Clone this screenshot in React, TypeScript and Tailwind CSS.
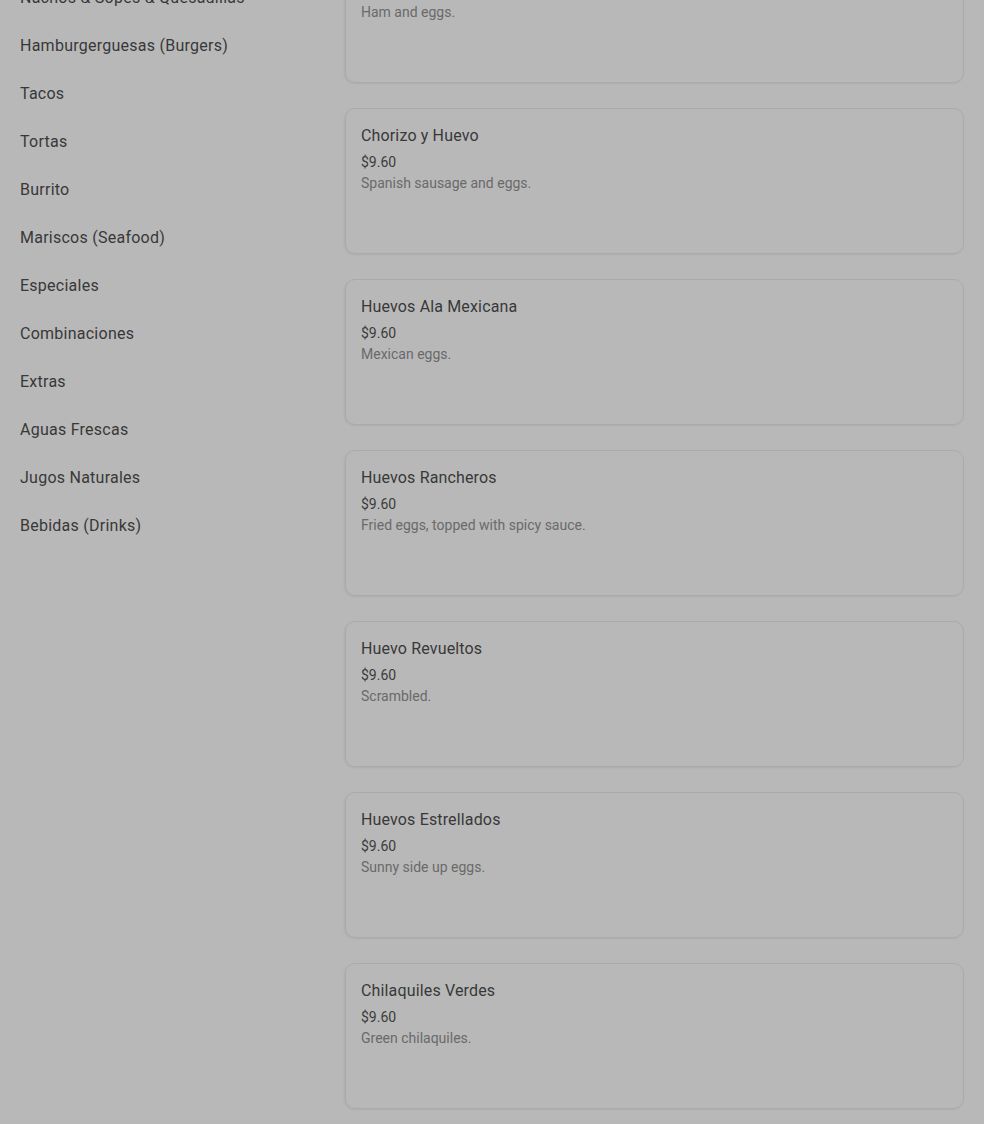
const categories = [
  "Nachos & Sopes & Quesadillas",
  "Hamburgerguesas (Burgers)",
  "Tacos",
  "Tortas",
  "Burrito",
  "Mariscos (Seafood)",
  "Especiales",
  "Combinaciones",
  "Extras",
  "Aguas Frescas",
  "Jugos Naturales",
  "Bebidas (Drinks)",
];

const items = [
  { name: "Jamón y Huevo", price: "$9.60", desc: "Ham and eggs." },
  { name: "Chorizo y Huevo", price: "$9.60", desc: "Spanish sausage and eggs." },
  { name: "Huevos Ala Mexicana", price: "$9.60", desc: "Mexican eggs." },
  { name: "Huevos Rancheros", price: "$9.60", desc: "Fried eggs, topped with spicy sauce." },
  { name: "Huevo Revueltos", price: "$9.60", desc: "Scrambled." },
  { name: "Huevos Estrellados", price: "$9.60", desc: "Sunny side up eggs." },
  { name: "Chilaquiles Verdes", price: "$9.60", desc: "Green chilaquiles." },
];

export default function App() {
  return (
    <div
      className="h-[1124px] overflow-hidden bg-[#b8b8b8]"
      style={{ fontFamily: "Roboto, 'Liberation Sans', sans-serif" }}
    >
      <div className="flex mt-[-63px] pr-[20px]">
        <aside className="w-[345px] shrink-0 pt-[37px] pl-5">
          <ul>
            {categories.map((c) => (
              <li key={c} className="py-3 text-base leading-6 tracking-[0.25px] text-[#383838]">
                {c}
              </li>
            ))}
          </ul>
        </aside>
        <main className="flex-1 flex flex-col gap-[25px]">
          {items.map((it) => (
            <div
              key={it.name}
              className="h-[146px] rounded-[10px] border border-[#aaaaaa] shadow-[-1px_1px_2px_rgba(0,0,0,0.06)] px-[15px] pt-[15px]"
            >
              <div className="text-base leading-6 tracking-[0.15px] text-[#383838]">{it.name}</div>
              <div className="mt-1 text-sm leading-5 text-[#3c3c3c]">{it.price}</div>
              <div className="mt-[1px] text-sm leading-5 text-[#6a6a6a]">{it.desc}</div>
            </div>
          ))}
        </main>
      </div>
    </div>
  );
}
